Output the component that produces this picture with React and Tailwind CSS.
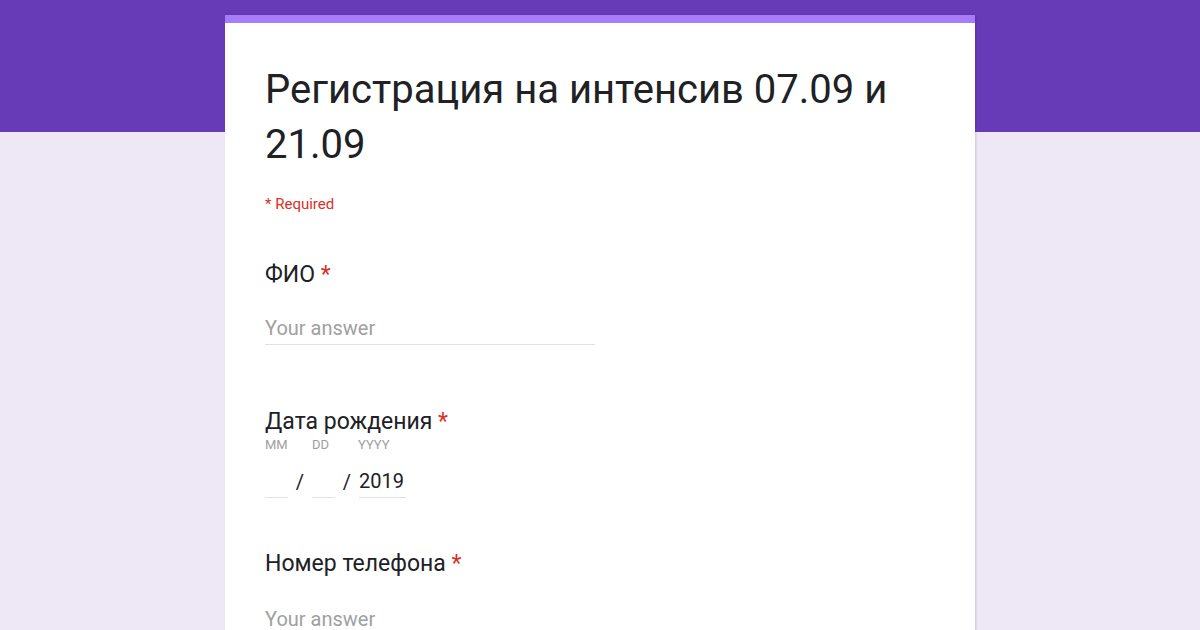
const font = { fontFamily: 'Roboto, "Noto Sans", Arial, sans-serif' };

function QuestionTitle({ children }) {
  return (
    <div className="text-[23px] leading-[30px] text-[#202124]">
      {children} <span className="text-[#d93025]">*</span>
    </div>
  );
}

function TextAnswer() {
  return (
    <div className="w-[330px] border-b border-[#e0e0e0] pb-[3px] text-[20px] leading-[26px] text-[#a0a0a0]">
      Your answer
    </div>
  );
}

export default function App() {
  return (
    <div className="h-[630px] overflow-hidden bg-[#ede7f6]" style={font}>
      <div className="h-[132px] bg-[#673ab7]" />
      <div className="-mt-[117px] mx-auto w-[750px] bg-white shadow-[1px_0_2px_rgba(0,0,0,0.15)]">
        <div className="h-[8px] bg-[#a77cf8]" />
        <div className="px-[40px] pt-[39px]">
          <h1 className="text-[40px] leading-[55px] text-[#202124] w-[660px]">
            Регистрация на интенсив 07.09 и 21.09
          </h1>
          <div className="mt-[22px] text-[15px] leading-[20px] text-[#d93025]">* Required</div>

          <div className="mt-[46px]">
            <QuestionTitle>ФИО</QuestionTitle>
            <div className="mt-[25px]">
              <TextAnswer />
            </div>
          </div>

          <div className="mt-[62px]">
            <QuestionTitle>Дата рождения</QuestionTitle>
            <div className="flex text-[13px] leading-[16px] text-[#9e9e9e]">
              <span className="w-[47px]">MM</span>
              <span className="w-[46px]">DD</span>
              <span>YYYY</span>
            </div>
            <div className="mt-[15px] flex items-end text-[20px] leading-[26px] text-[#202124]">
              <div className="w-[23px] h-[26px] border-b border-[#e0e0e0] box-content pb-[3px]" />
              <span className="w-[24px] text-center pb-[3px]">/</span>
              <div className="w-[23px] h-[26px] border-b border-[#e0e0e0] box-content pb-[3px]" />
              <span className="w-[24px] text-center pb-[3px]">/</span>
              <div className="w-[47px] border-b border-[#e0e0e0] pb-[3px]">2019</div>
            </div>
          </div>

          <div className="mt-[51px]">
            <QuestionTitle>Номер телефона</QuestionTitle>
            <div className="mt-[27px]">
              <TextAnswer />
            </div>
          </div>
        </div>
      </div>
    </div>
  );
}
